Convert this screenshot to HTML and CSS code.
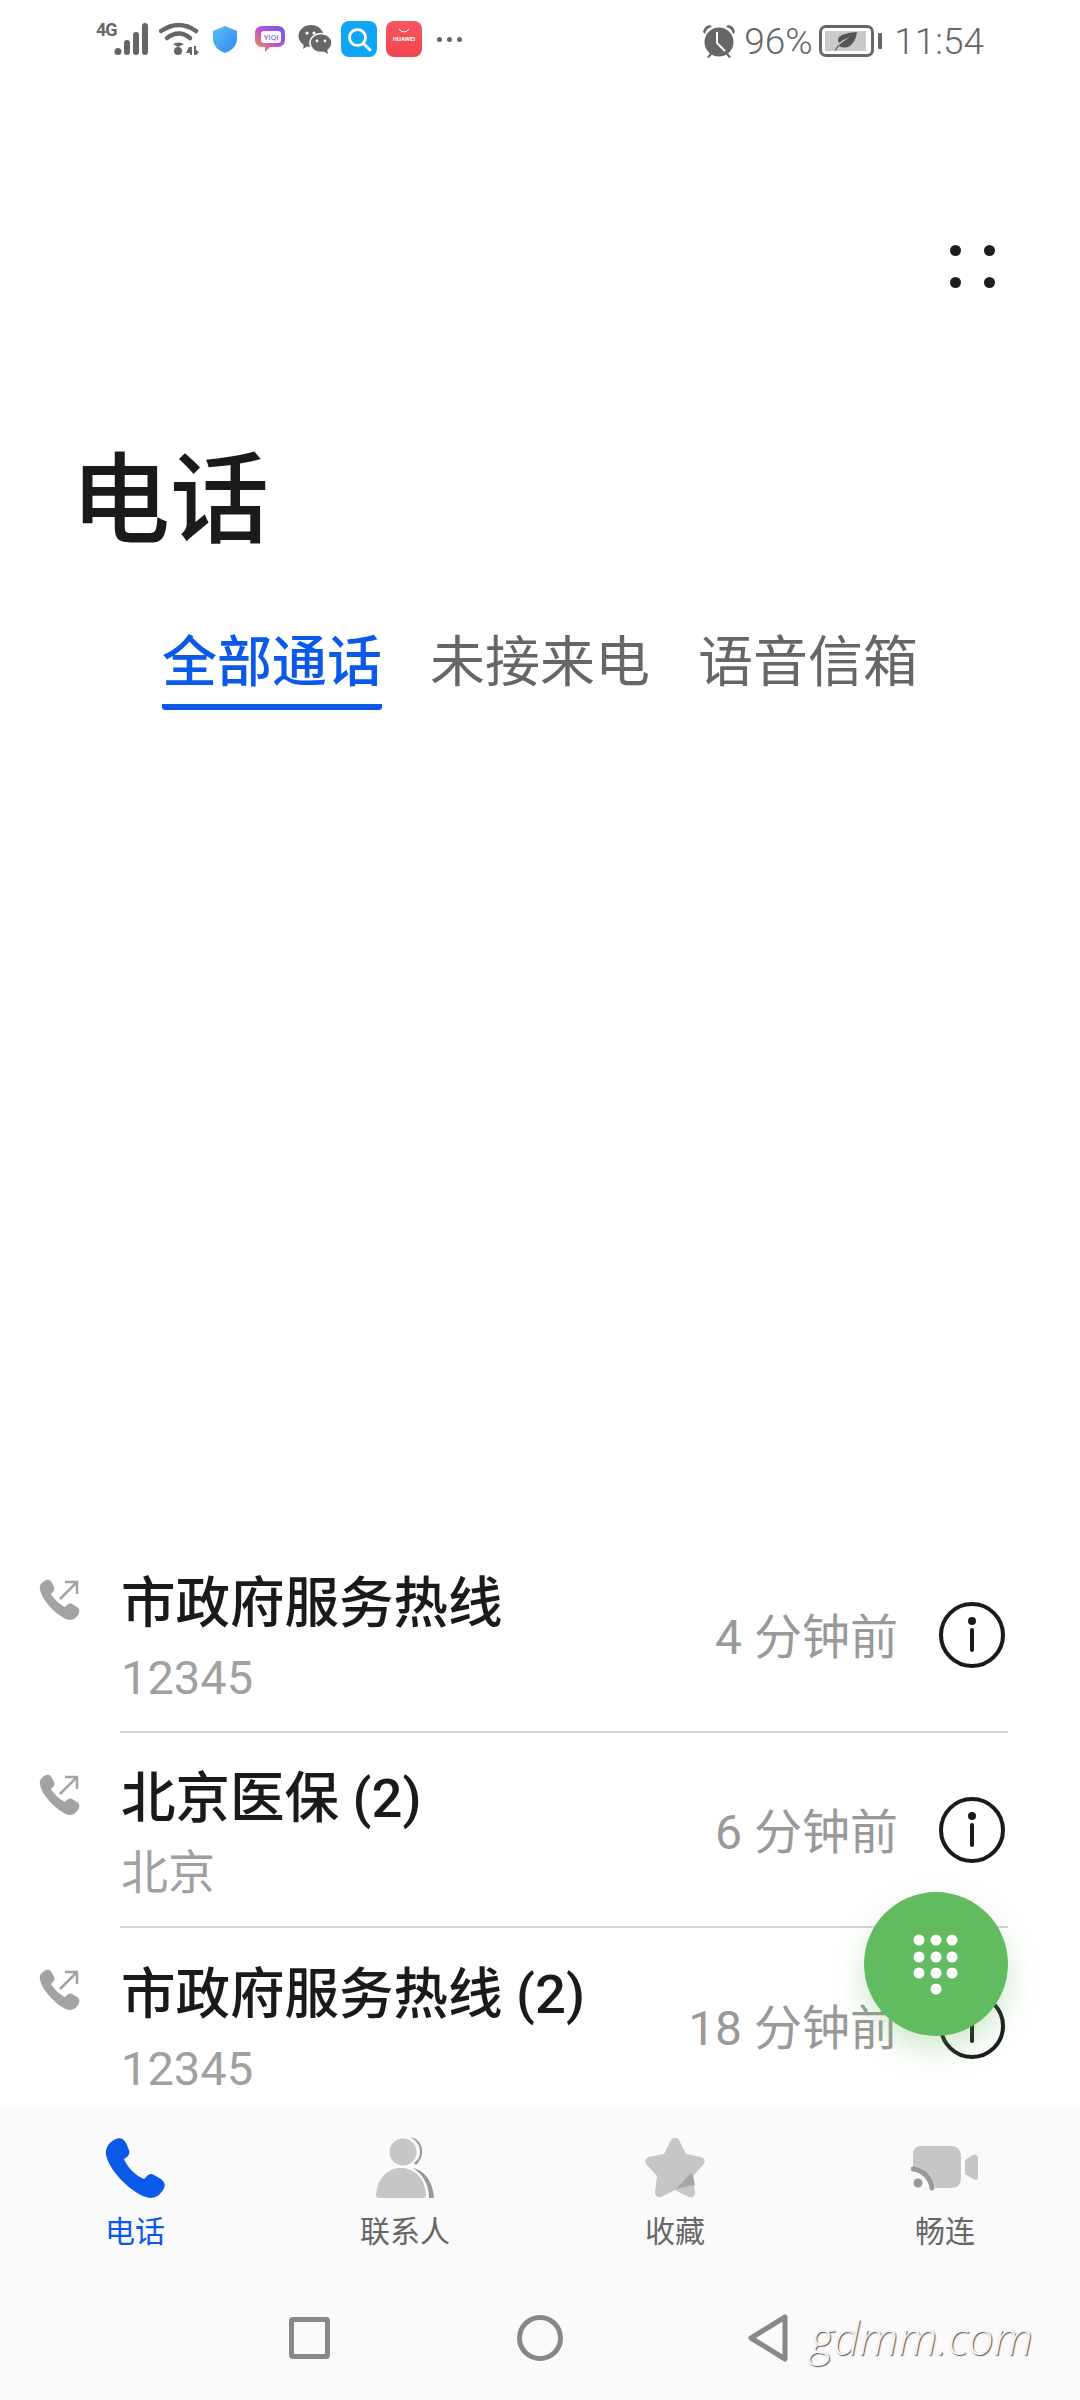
FILE: index.html
```html
<!DOCTYPE html>
<html lang="zh-CN">
  <head>
    <meta charset="UTF-8" />
    <meta name="viewport" content="width=device-width, initial-scale=1" />
    <title>电话</title>
    <link rel="stylesheet" href="styles.css">
  </head>
  <body>
    <div class="page">
      <div class="statusBar">
        <div class="statusLeft">
          <span class="netLabel">4G</span>
          <svg class="signal" width="36" height="34" viewBox="0 0 36 34"><g fill="#666"><circle cx="4" cy="29.500" r="3.500"/><rect x="10" y="18" width="6" height="15" rx="3"/><rect x="19" y="10" width="6" height="23" rx="3"/><rect x="28" y="1" width="6" height="32" rx="3"/></g></svg>
          <svg class="wifi" width="42" height="34" viewBox="0 0 42 34"><g fill="none" stroke="#666" stroke-width="4.500" stroke-linecap="round"><path d="M2 9Q20 -3 37 9"/><path d="M8 16Q20 7 31 16"/></g><circle cx="19" cy="29" r="4" fill="#666"/><path d="M14 22Q19 19 25 22L19 25Z" fill="#666"/><path d="M30 25l-3 6h4v2h2V25zM35 24h2v4l3 2 -3 3h-2z" fill="#666"/></svg>
          <svg class="shield" width="26" height="28" viewBox="0 0 26 28"><defs><linearGradient id="shieldFill" x1="0" y1="0" x2="1" y2="1"><stop offset="0" stop-color="#5cc0f5"/><stop offset="1" stop-color="#2f86f0"/></linearGradient></defs><path d="M13 1L25 6V14C25 21 19 26 13 28C7 26 1 21 1 14V6Z" fill="url(#shieldFill)"/></svg>
          <svg class="chatApp" width="30" height="28" viewBox="0 0 30 28"><defs><linearGradient id="chatFill" x1="0" y1="1" x2="1" y2="0"><stop offset="0" stop-color="#f79a2c"/><stop offset="0.500" stop-color="#c04fd8"/><stop offset="1" stop-color="#5a5ff0"/></linearGradient></defs><path d="M7 1H23C27 1 30 4 30 8V15C30 19 27 22 23 22H15L10 27V22H7C3 22 0 19 0 15V8C0 4 3 1 7 1Z" fill="url(#chatFill)"/><rect x="6" y="6" width="20" height="12" rx="3" fill="#fff"/><text class="chatText" x="16" y="15" text-anchor="middle">YIQI</text></svg>
          <svg class="wechat" width="34" height="30" viewBox="0 0 34 30"><g fill="#666"><ellipse cx="13" cy="12" rx="12.500" ry="11"/><path d="M6 19l-1 6 6-4z"/></g><ellipse cx="23" cy="19" rx="11" ry="9.500" fill="#666" stroke="#fff" stroke-width="1.500"/><path d="M29 25l1 5-5-3z" fill="#666"/><g fill="#fff"><circle cx="9" cy="9" r="1.600"/><circle cx="16" cy="9" r="1.600"/><circle cx="19" cy="17" r="1.400"/><circle cx="27" cy="17" r="1.400"/></g></svg>
          <div class="appIcon searchApp">
            <svg width="36" height="36" viewBox="0 0 36 36"><circle cx="16.500" cy="16.500" r="8" fill="none" stroke="#fff" stroke-width="2.800"/><path d="M22.500 22.500L29 29" stroke="#fff" stroke-width="3" stroke-linecap="round"/></svg>
          </div>
          <div class="appIcon storeApp">
            <svg width="14" height="6" viewBox="0 0 14 6"><path d="M2 1Q7 7 12 1" fill="none" stroke="#fff" stroke-width="1"/></svg>
            <span class="storeLabel">HUAWEI</span>
          </div>
          <div class="moreDots"><i></i><i></i><i></i></div>
        </div>
        <div class="statusRight">
          <svg class="alarm" width="36" height="34" viewBox="0 0 36 34"><g fill="#666"><circle cx="18" cy="18" r="14.500"/><path d="M2 8Q3 2 9 1L11 3Q5 4 4 10ZM34 8Q33 2 27 1L25 3Q31 4 32 10Z"/><path d="M6 33l4-5 2 1-4 5zM30 33l-4-5-2 1 4 5z"/></g><path d="M16 8V19L24 27" fill="none" stroke="#fff" stroke-width="2"/></svg>
          <span class="percent">96%</span>
          <div class="battery">
            <div class="batteryBody">
              <div class="batteryFill">
                <svg width="24" height="20" viewBox="0 0 24 20"><path d="M1 19Q3 15 6 13Q11 9 16 6Q10 8 5 12Q2 7 8 4Q16 1 23 1Q22 10 16 15Q10 18 5 15Q3 17 2 19.500Z" fill="#555"/></svg>
              </div>
            </div>
            <div class="batteryNub"></div>
          </div>
          <span class="clock">11:54</span>
        </div>
      </div>

      <div class="topActions">
        <div class="gridDots"><i></i><i></i><i></i><i></i></div>
      </div>

      <h1 class="pageTitle">电话</h1>

      <div class="tabs">
        <div class="tab tabActive">全部通话</div>
        <div class="tab">未接来电</div>
        <div class="tab">语音信箱</div>
      </div>

      <div class="callArea">
        <div class="callList">
          <div class="callRow">
            <svg class="callType" width="42" height="42" viewBox="0 0 42 42"><use href="#outgoingCall"/></svg>
            <div class="callBody">
              <div class="callText">
                <div class="callName">市政府服务热线</div>
                <div class="callSub">12345</div>
              </div>
              <div class="callTime">4 分钟前</div>
              <svg class="infoIcon" width="66" height="66" viewBox="0 0 66 66"><use href="#infoGlyph"/></svg>
            </div>
          </div>
          <div class="callRow">
            <svg class="callType" width="42" height="42" viewBox="0 0 42 42"><use href="#outgoingCall"/></svg>
            <div class="callBody">
              <div class="callText">
                <div class="callName">北京医保 (2)</div>
                <div class="callSub">北京</div>
              </div>
              <div class="callTime">6 分钟前</div>
              <svg class="infoIcon" width="66" height="66" viewBox="0 0 66 66"><use href="#infoGlyph"/></svg>
            </div>
          </div>
          <div class="callRow">
            <svg class="callType" width="42" height="42" viewBox="0 0 42 42"><use href="#outgoingCall"/></svg>
            <div class="callBody">
              <div class="callText">
                <div class="callName">市政府服务热线 (2)</div>
                <div class="callSub">12345</div>
              </div>
              <div class="callTime">18 分钟前</div>
              <svg class="infoIcon" width="66" height="66" viewBox="0 0 66 66"><use href="#infoGlyph"/></svg>
            </div>
          </div>
        </div>
        <div class="dialFab">
          <svg width="50" height="62" viewBox="0 0 50 62"><g fill="#fff"><circle cx="8" cy="7" r="5.500"/><circle cx="25" cy="7" r="5.500"/><circle cx="41" cy="7" r="5.500"/><circle cx="8" cy="24" r="5.500"/><circle cx="25" cy="24" r="5.500"/><circle cx="41" cy="24" r="5.500"/><circle cx="8" cy="40" r="5.500"/><circle cx="25" cy="40" r="5.500"/><circle cx="41" cy="40" r="5.500"/><circle cx="25" cy="56" r="5.500"/></g></svg>
        </div>
      </div>

      <div class="bottomArea">
        <div class="tabBar">
          <div class="barItem barActive">
            <svg width="64" height="64" viewBox="0 0 64 64"><path d="M13 3C17 1 21 3 23 7L26 14C27 17 26 19 24 21L21 23C24 31 33 40 41 43L44 40C46 38 48 37 51 39L58 43C62 46 63 50 60 54C57 59 53 62 47 62C31 60 6 35 3 19C2 12 6 6 13 3Z" fill="#0a59e8"/></svg>
            <span>电话</span>
          </div>
          <div class="barItem">
            <svg width="64" height="64" viewBox="0 0 64 64"><path d="M37 1C45 2 50 9 49 17C49 22 46 26 43 29L41 27C45 24 47 21 47 15C47 9 43 4 37 1Z" fill="#999"/><path d="M40 32C50 34 60 44 61 62H56C56 47 49 38 40 32Z" fill="#999"/><circle cx="30" cy="16" r="13.500" fill="#c6c6c6"/><path d="M3 59C4 42 15 32 28 32C41 32 52 42 53 59C53 61 52 62 50 62H6C4 62 3 61 3 59Z" fill="#c6c6c6"/></svg>
            <span>联系人</span>
          </div>
          <div class="barItem">
            <svg width="64" height="64" viewBox="0 0 64 64"><path d="M28 4C30 1 34 1 36 4L43 18L58 21C62 22 63 26 60 29L50 40L52 56C52 60 49 62 46 61L32 54L18 61C15 62 12 60 12 56L14 40L4 29C1 26 2 22 6 21L21 18Z" fill="#c6c6c6"/><path d="M32 54L48 37L50 40L52 49C42 50 36 52 32 54Z" fill="#a5a5a5"/></svg>
            <span>收藏</span>
          </div>
          <div class="barItem">
            <svg width="68" height="64" viewBox="0 0 68 64"><path d="M10 10H40C46 10 50 14 50 20V42C50 49 46 52 40 52H24C23 42 15 32 2 31V18C2 13 5 10 10 10Z" fill="#c6c6c6"/><path d="M54 24L62 19C65 18 67 20 67 22V41C67 44 65 45 62 43L54 38Z" fill="#c6c6c6"/><path d="M2 33C12 34 20 42 21 52" fill="none" stroke="#999" stroke-width="5" stroke-linecap="round"/><circle cx="7" cy="47" r="4.500" fill="#999"/></svg>
            <span>畅连</span>
          </div>
        </div>
        <div class="navBar">
          <div class="navSquare"></div>
          <div class="navCircle"></div>
          <svg class="navBack" width="42" height="48" viewBox="0 0 42 48"><path d="M38 3L4 24L38 45Z" fill="none" stroke="#888" stroke-width="5" stroke-linejoin="round"/></svg>
        </div>
        <div class="watermark">gdmm.com</div>
      </div>

      <svg class="iconDefs" width="0" height="0">
        <defs>
          <g id="outgoingCall">
            <path d="M7 1C10 0 12 2 13 4L15 8C16 10 15 12 14 13L12 15C15 20 21 26 26 28L28 26C29 25 31 24 33 25L38 28C41 30 41 33 39 36C37 39 34 41 30 41C20 39 2 21 1 10C0 6 3 3 7 1Z" fill="#a3a3a3"/>
            <path d="M21 20L38 3M26 3H38V15" fill="none" stroke="#a3a3a3" stroke-width="2.500"/>
          </g>
          <g id="infoGlyph">
            <circle cx="33" cy="33" r="31" fill="none" stroke="#1a1a1a" stroke-width="4"/>
            <circle cx="33" cy="19" r="4" fill="#1a1a1a"/>
            <path d="M33 28V48" stroke="#1a1a1a" stroke-width="4" stroke-linecap="round"/>
          </g>
        </defs>
      </svg>
    </div>
  </body>
</html>
```

FILE: styles.css
```css
* {
  box-sizing: border-box;
}
body {
  margin: 0;
  padding: 0;
  background: #fff;
  font-family: Roboto, "Noto Sans CJK SC", sans-serif;
}
.page {
  position: relative;
  width: 1080px;
  height: 2400px;
  display: flex;
  flex-direction: column;
  overflow: hidden;
}
.iconDefs {
  position: absolute;
}

/* status bar */
.statusBar {
  height: 78px;
  padding: 21px 96px 0 96px;
  display: flex;
  justify-content: space-between;
  align-items: flex-start;
  color: #666;
}
.statusLeft {
  display: flex;
  align-items: center;
  height: 36px;
}
.netLabel {
  width: 18px;
  align-self: flex-start;
  margin-top: 1px;
  font-size: 18px;
  line-height: 16px;
  font-weight: 700;
  white-space: nowrap;
  letter-spacing: -1px;
}
.signal {
  margin: 0 9px 0 0;
}
.wifi {
  margin-right: 11px;
}
.shield {
  margin-right: 17px;
}
.chatApp {
  margin-right: 13px;
}
.chatText {
  font-size: 8px;
  fill: #6a4fd0;
}
.wechat {
  margin-right: 9px;
}
.appIcon {
  width: 36px;
  height: 36px;
  border-radius: 8px;
  overflow: hidden;
}
.searchApp {
  background: #0fa6f5;
  margin-right: 9px;
}
.storeApp {
  background: linear-gradient(#f9565f, #f0444e);
  margin-right: 15px;
  display: flex;
  flex-direction: column;
  align-items: center;
  padding-top: 7px;
}
.storeLabel {
  color: #fff;
  font-size: 6px;
  line-height: 10px;
  font-weight: 700;
  white-space: nowrap;
}
.moreDots {
  display: flex;
  gap: 5px;
}
.moreDots i {
  width: 5px;
  height: 5px;
  border-radius: 50%;
  background: #666;
}
.statusRight {
  display: flex;
  align-items: center;
  height: 36px;
}
.alarm {
  margin-right: 7px;
  margin-top: 3px;
}
.percent,
.clock {
  margin-top: 5px;
  font-size: 37px;
  line-height: 36px;
  font-weight: 300;
  white-space: nowrap;
}
.percent {
  width: 75px;
}
.clock {
  margin-left: 12px;
}
.battery {
  display: flex;
  align-items: center;
  gap: 4px;
  margin-top: 3px;
}
.batteryBody {
  width: 55px;
  height: 32px;
  border: 3px solid #666;
  border-radius: 7px;
  padding: 3px;
}
.batteryFill {
  width: 96%;
  height: 100%;
  background: #c9c9c9;
  display: flex;
  justify-content: center;
  align-items: center;
}
.batteryNub {
  width: 4px;
  height: 16px;
  background: #666;
  border-radius: 1px;
}

/* header */
.topActions {
  height: 373px;
  padding: 167px 85px 0 0;
  display: flex;
  justify-content: flex-end;
}
.gridDots {
  width: 45px;
  height: 43px;
  display: grid;
  grid-template-columns: 11px 11px;
  grid-template-rows: 11px 11px;
  justify-content: space-between;
  align-content: space-between;
}
.gridDots i {
  background: #1f1f1f;
  border-radius: 50%;
}
.pageTitle {
  margin: 0;
  padding-left: 71px;
  height: 181px;
  font-size: 99px;
  line-height: 100px;
  font-weight: 500;
  color: #1a1a1a;
}
.tabs {
  display: flex;
  gap: 48px;
  padding-left: 162px;
  height: 264px;
}
.tab {
  height: 78px;
  font-size: 55px;
  line-height: 60px;
  color: #666;
  white-space: nowrap;
}
.tabActive {
  color: #0a59e8;
  font-weight: 500;
  border-bottom: 6px solid #0a59e8;
  border-radius: 0 0 3px 3px;
}

/* call list */
.callArea {
  flex: 1;
  position: relative;
  overflow: hidden;
}
.callList {
  padding: 0 72px 0 0;
  margin-top: 642px;
}
.callRow {
  display: flex;
  align-items: flex-start;
  height: 195px;
  padding-left: 39px;
}
.callType {
  margin: 41px 39px 0 0;
  flex: none;
}
.callBody {
  flex: 1;
  display: flex;
  align-items: center;
  height: 195px;
  border-bottom: 2px solid #d4d4d4;
}
.callRow:last-child .callBody {
  border-bottom: none;
}
.callText {
  flex: 1;
  padding-top: 9px;
  padding-left: 1px;
}
.callName {
  font-size: 54.500px;
  line-height: 70px;
  font-weight: 500;
  color: #1a1a1a;
  white-space: nowrap;
}
.callSub {
  margin-top: 8px;
  font-size: 47px;
  line-height: 64px;
  color: #a0a0a0;
}
.callTime {
  margin-right: 41px;
  padding-bottom: 3px;
  font-size: 48px;
  color: #999;
  white-space: nowrap;
}
.infoIcon {
  margin-right: 3px;
  flex: none;
}
.dialFab {
  position: absolute;
  right: 72px;
  bottom: 72px;
  width: 144px;
  height: 144px;
  border-radius: 50%;
  background: #62bb5e;
  box-shadow: 0 14px 30px rgba(98, 187, 94, 0.3);
  display: flex;
  justify-content: center;
  align-items: center;
}

/* bottom tabs and navigation */
.bottomArea {
  position: relative;
  height: 292px;
  background: #fafafa;
}
.tabBar {
  height: 170px;
  padding-top: 28px;
  display: grid;
  grid-template-columns: repeat(4, 270px);
}
.barItem {
  display: flex;
  flex-direction: column;
  align-items: center;
  color: #666;
  font-size: 30px;
  line-height: 40px;
}
.barItem span {
  margin-top: 12px;
}
.barActive {
  color: #0a59e8;
}
.navBar {
  height: 48px;
  margin-top: 36px;
  display: flex;
  align-items: center;
  padding-left: 289px;
}
.navSquare {
  width: 41px;
  height: 42px;
  border: 5px solid #888;
  border-radius: 4px;
  margin-right: 187px;
}
.navCircle {
  width: 46px;
  height: 46px;
  border: 5px solid #888;
  border-radius: 50%;
  margin-right: 184px;
}
.watermark {
  position: absolute;
  left: 810px;
  top: 198px;
  font-family: "Open Sans", sans-serif;
  font-size: 45.500px;
  font-style: italic;
  font-weight: 300;
  color: #f3f3f3;
  text-shadow: 1px 1px 1px #555;
  white-space: nowrap;
}
```
